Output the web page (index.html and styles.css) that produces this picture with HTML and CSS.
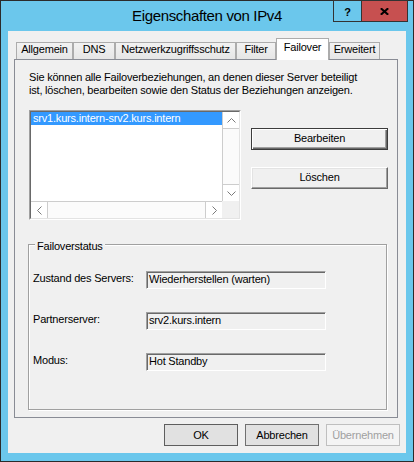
FILE: index.html
```html
<!DOCTYPE html>
<html lang="de">
<head>
<meta charset="utf-8">
<title>Eigenschaften von IPv4</title>
<link rel="stylesheet" href="styles.css">
</head>
<body>
<div class="window">
  <div class="titlebar">
    <div class="tb-spacer"></div>
    <div class="title">Eigenschaften von IPv4</div>
    <div class="caption-buttons">
      <div class="cap-btn help">?</div>
      <div class="cap-btn close">
        <svg width="9" height="7" viewBox="0 0 9 7"><path d="M0.8 0.3 L8.2 6.7 M8.2 0.3 L0.8 6.7" stroke="#000" stroke-width="2.1" fill="none"/></svg>
      </div>
    </div>
  </div>
  <div class="client">
    <div class="tabs">
      <div class="tab t-allgemein">Allgemein</div>
      <div class="tab t-dns">DNS</div>
      <div class="tab t-nap">Netzwerkzugriffsschutz</div>
      <div class="tab t-filter">Filter</div>
      <div class="tab t-failover selected">Failover</div>
      <div class="tab t-erweitert">Erweitert</div>
    </div>
    <div class="panel">
      <p class="intro">Sie können alle Failoverbeziehungen, an denen dieser Server beteiligt<br>ist, löschen, bearbeiten sowie den Status der Beziehungen anzeigen.</p>
      <div class="list-row">
        <div class="listbox">
          <div class="listbox-inner">
            <div class="list-items">
              <div class="item selected">srv1.kurs.intern-srv2.kurs.intern</div>
            </div>
            <div class="vscroll">
              <div class="sb-btn sb-up"><svg width="9" height="5" viewBox="0 0 9 5"><polyline points="0.5,4.5 4.5,0.5 8.5,4.5" fill="none" stroke="#7a7a7a" stroke-width="1"/></svg></div>
              <div class="sb-track"></div>
              <div class="sb-btn sb-down"><svg width="9" height="5" viewBox="0 0 9 5"><polyline points="0.5,0.5 4.5,4.5 8.5,0.5" fill="none" stroke="#7a7a7a" stroke-width="1"/></svg></div>
            </div>
            <div class="hscroll">
              <div class="sb-btn sb-left"><svg width="5" height="9" viewBox="0 0 5 9"><polyline points="4.5,0.5 0.5,4.5 4.5,8.5" fill="none" stroke="#7a7a7a" stroke-width="1"/></svg></div>
              <div class="sb-track"></div>
              <div class="sb-btn sb-right"><svg width="5" height="9" viewBox="0 0 5 9"><polyline points="0.5,0.5 4.5,4.5 0.5,8.5" fill="none" stroke="#7a7a7a" stroke-width="1"/></svg></div>
            </div>
            <div class="corner"></div>
          </div>
        </div>
        <div class="side-buttons">
          <button class="btn3d default">Bearbeiten</button>
          <button class="btn3d">Löschen</button>
        </div>
      </div>
      <div class="group">
        <div class="group-title">Failoverstatus</div>
        <div class="rows">
          <div class="label">Zustand des Servers:</div>
          <div class="field">Wiederherstellen (warten)</div>
          <div class="label">Partnerserver:</div>
          <div class="field">srv2.kurs.intern</div>
          <div class="label">Modus:</div>
          <div class="field">Hot Standby</div>
        </div>
      </div>
    </div>
    <div class="footer">
      <button class="btn default">OK</button>
      <button class="btn">Abbrechen</button>
      <button class="btn disabled">Übernehmen</button>
    </div>
  </div>
</div>
</body>
</html>
```

FILE: styles.css
```css
* { box-sizing: border-box; }
html, body { margin: 0; padding: 0; }
body {
  font-family: "Liberation Sans", Arial, sans-serif;
  font-size: 11px;
  letter-spacing: -0.2px;
  color: #000;
  background: #6bc7ec;
}
.window {
  width: 414px;
  height: 462px;
  border: 1px solid #2b2b2b;
  background: #6bc7ec;
  display: flex;
  flex-direction: column;
}
.titlebar {
  height: 30px;
  flex: none;
  display: grid;
  grid-template-columns: 1fr auto 1fr;
}
.title {
  align-self: center;
  font-size: 15px;
  letter-spacing: -0.35px;
  line-height: 18px;
  padding-bottom: 1px;
  white-space: nowrap;
}
.caption-buttons {
  justify-self: end;
  align-self: start;
  margin: -1px 5px 0 0;
  display: flex;
  height: 22px;
  border: 1px solid #333;
}
.cap-btn {
  height: 100%;
  display: flex;
  align-items: center;
  justify-content: center;
}
.help {
  width: 27px;
  background: #6bc7ec;
  font-weight: bold;
  font-size: 11px;
  letter-spacing: 0;
  padding-top: 1px;
}
.close {
  width: 46px;
  border-left: 1px solid #333;
  background: #c75050;
  padding-top: 1px;
}
.client {
  margin: 0 7px 8px 7px;
  height: 422px;
  flex: none;
  background: #f0f0f0;
  padding: 7px 0 0 6px;
  display: flex;
  flex-direction: column;
}
.tabs {
  display: flex;
  align-items: flex-end;
  height: 21px;
  padding-left: 2px;
  flex: none;
}
.tab {
  height: 17px;
  border: 1px solid #acacac;
  border-bottom: 0;
  background: linear-gradient(#f2f2f2, #e6e6e6);
  text-align: center;
  line-height: 13px;
  white-space: nowrap;
  flex: none;
}
.tab.selected {
  height: 22px;
  margin-bottom: -1px;
  background: #fff;
  padding-top: 2px;
  position: relative;
  z-index: 1;
}
.t-allgemein { width: 57px; }
.t-dns { width: 42px; }
.t-nap { width: 121px; }
.t-filter { width: 40px; }
.t-failover { width: 53px; }
.t-erweitert { width: 51px; }
.panel {
  width: 384px;
  height: 359px;
  flex: none;
  border: 1px solid #898c95;
  background: #f0f0f0;
  padding: 11px 0 0 14px;
}
.intro {
  margin: 0;
  line-height: 13px;
  white-space: nowrap;
}
.list-row {
  display: flex;
  gap: 10px;
  margin-top: 13px;
}
.listbox {
  width: 212px;
  height: 110px;
  border: 1px solid;
  border-color: #a0a0a0 #fff #fff #a0a0a0;
}
.listbox-inner {
  height: 100%;
  border: 1px solid;
  border-color: #696969 #e3e3e3 #e3e3e3 #696969;
  display: grid;
  grid-template-columns: 191px 17px;
  grid-template-rows: 89px 17px;
  background: #fff;
}
.list-items { background: #fff; overflow: hidden; }
.item {
  height: 13px;
  line-height: 13px;
  padding-left: 2px;
  white-space: nowrap;
}
.item.selected { background: #3399ff; color: #fff; }
.vscroll {
  display: flex;
  flex-direction: column;
  border-left: 1px solid #cdcdcd;
  background: #fbfbfb;
}
.hscroll {
  display: flex;
  border-top: 1px solid #cdcdcd;
  background: #fbfbfb;
}
.sb-track { flex: 1; }
.sb-btn {
  display: flex;
  align-items: center;
  justify-content: center;
  background: #fff;
  flex: none;
}
.vscroll .sb-btn { height: 17px; }
.hscroll .sb-btn { width: 17px; }
.sb-up { border-bottom: 1px solid #cdcdcd; }
.sb-down { border-top: 1px solid #cdcdcd; }
.sb-left { border-right: 1px solid #cdcdcd; }
.sb-right { border-left: 1px solid #cdcdcd; }
.corner { background: #f0f0f0; }
.side-buttons {
  width: 137px;
  display: flex;
  flex-direction: column;
  gap: 17px;
  padding-top: 18px;
}
.btn3d {
  font: inherit;
  letter-spacing: inherit;
  color: #000;
  height: 22px;
  width: 137px;
  padding: 0 0 2px 0;
  line-height: 13px;
  background: #f0f0f0;
  border: 1px solid;
  border-color: #fff #696969 #696969 #fff;
  box-shadow: inset -1px -1px 0 #a0a0a0, inset 1px 1px 0 #e3e3e3;
}
.btn3d.default {
  border-color: #3c3c3c;
  box-shadow: inset 1px 1px 0 #fff, inset -1px -1px 0 #696969, inset -2px -2px 0 #a0a0a0;
}
.group {
  margin: 24px 0 0 -1px;
  width: 359px;
  height: 166px;
  border: 1px solid #a0a0a0;
  box-shadow: 1px 1px 0 #fff, inset 1px 1px 0 #fff;
  padding: 0 0 0 4px;
}
.group-title {
  margin: -5px 0 0 2px;
  padding: 0 2px;
  width: fit-content;
  line-height: 13px;
  background: #f0f0f0;
}
.rows {
  margin-top: 18px;
  display: grid;
  grid-template-columns: 113px 180px;
  grid-auto-rows: 18px;
  row-gap: 23px;
}
.label {
  line-height: 13px;
  padding-top: 1px;
  white-space: nowrap;
}
.field {
  border: 1px solid;
  border-color: #a0a0a0 #fff #fff #a0a0a0;
  box-shadow: inset 1px 1px 0 #696969;
  padding: 1px 0 0 2px;
  line-height: 13px;
  white-space: nowrap;
  background: #f0f0f0;
}
.footer {
  display: flex;
  justify-content: flex-end;
  gap: 7px;
  padding-right: 6px;
  margin-top: 6px;
}
.btn {
  font: inherit;
  letter-spacing: inherit;
  color: #000;
  width: 74px;
  height: 22px;
  padding: 0;
  line-height: 13px;
  border: 1px solid #707070;
  background: #e1e1e1;
}
.btn.default { border-color: #5e5e5e; }
.btn.disabled {
  border-color: #bfbfbf;
  background: #f4f4f4;
  color: #a0a0a0;
}
```
